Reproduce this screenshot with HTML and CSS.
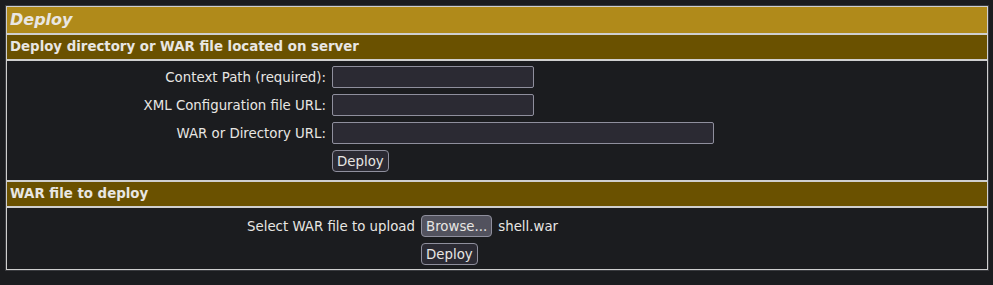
FILE: index.html
```html
<!DOCTYPE html>
<html lang="en">

<head>
  <meta charset="UTF-8">
  <title>Tomcat Manager - Deploy</title>
  <link rel="stylesheet" href="styles.css">
</head>

<body>
  <div class="deploy">
    <div class="cell title">Deploy</div>
    <div class="cell header-left">Deploy directory or WAR file located on server</div>

    <div class="cell">
      <form class="deploy-form server-form">
        <label class="row-right" for="deployPath">Context Path (required):</label>
        <input type="text" id="deployPath" class="field">

        <label class="row-right" for="deployConfig">XML Configuration file URL:</label>
        <input type="text" id="deployConfig" class="field">

        <label class="row-right" for="deployWar">WAR or Directory URL:</label>
        <input type="text" id="deployWar" class="field wide">

        <span></span>
        <button type="button" class="btn">Deploy</button>
      </form>
    </div>

    <div class="cell header-left">WAR file to deploy</div>

    <div class="cell">
      <form class="deploy-form upload-form">
        <span class="row-right">Select WAR file to upload</span>
        <div class="file-pick">
          <button type="button" class="btn browse">Browse...</button>
          <span class="file-name">shell.war</span>
        </div>

        <span></span>
        <button type="button" class="btn">Deploy</button>
      </form>
    </div>
  </div>
</body>

</html>
```

FILE: styles.css
```css
body {
  margin: 5px 4px 5px 5px;
  background-color: #1b1c1f;
  color: #e8e6e3;
  font-family: "DejaVu Sans", sans-serif;
}

.deploy {
  border: 1px solid #3a3b3f;
}

.cell {
  border: 1px solid #cfcfcf;
  padding: 3px;
}

.title {
  height: 20px;
  line-height: 20px;
  background-color: #b08a1a;
  font-size: 16px;
  font-weight: bold;
  font-style: italic;
}

.header-left {
  height: 18px;
  line-height: 18px;
  background-color: #6a5100;
  font-size: 13.33px;
  font-weight: bold;
}

.deploy-form {
  display: grid;
  column-gap: 6px;
  grid-auto-rows: 28px;
  align-items: center;
  justify-items: start;
  font-size: 13.33px;
  margin: -3px;
}

.server-form {
  grid-template-columns: 319px 1fr;
  padding: 2px 0 5px;
}

.upload-form {
  grid-template-columns: 408px 1fr;
  padding: 4px 0 1px;
}

.row-right {
  justify-self: end;
}

.field {
  box-sizing: border-box;
  width: 202px;
  height: 22px;
  margin: 0;
  background-color: #2b2a33;
  border: 1px solid #8f8f9d;
  border-radius: 2px;
  color: #e8e6e3;
}

.field.wide {
  width: 382px;
}

.btn {
  box-sizing: border-box;
  height: 22px;
  padding: 0 4px;
  background-color: #2b2a33;
  border: 1px solid #8f8f9d;
  border-radius: 4px;
  color: #e8e6e3;
  font-family: "DejaVu Sans", sans-serif;
  font-size: 13.33px;
}

.browse {
  background-color: #52525e;
}

.file-pick {
  display: flex;
  align-items: center;
  gap: 6px;
}
```
